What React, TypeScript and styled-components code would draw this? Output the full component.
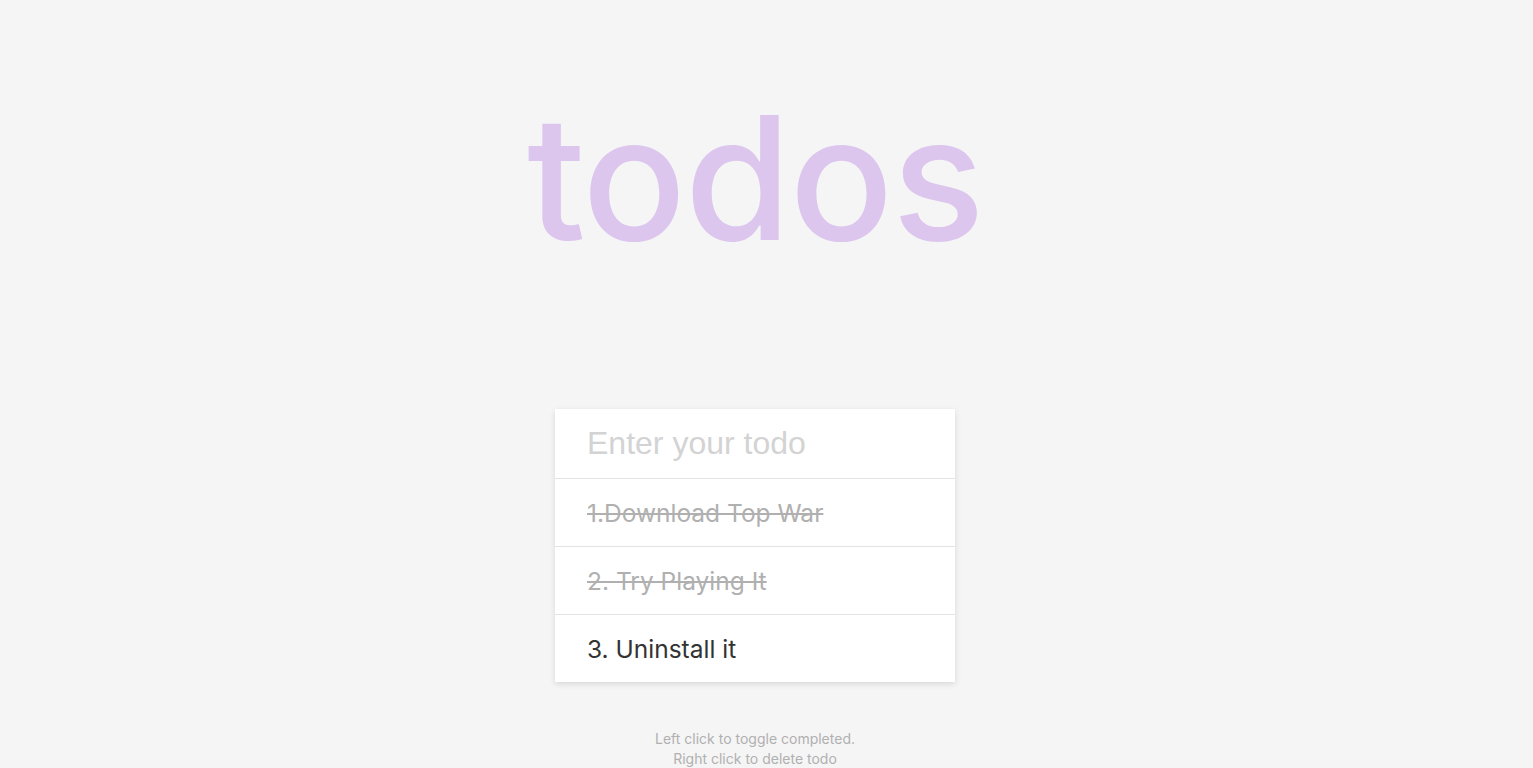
import styled, { createGlobalStyle } from 'styled-components';

const GlobalStyle = createGlobalStyle`
  * { box-sizing: border-box; }
  body {
    margin: 0;
    background-color: #f5f5f5;
    font-family: Inter, "Open Sans", sans-serif;
    overflow: hidden;
  }
`

const Page = styled.div`
  width: calc(100% - 23px);
  display: flex;
  flex-direction: column;
  align-items: center;
`

const Title = styled.h1`
  margin: 0;
  height: 409px;
  padding-top: 91px;
  font-size: 172px;
  line-height: 1;
  font-weight: 500;
  letter-spacing: -1.5px;
  color: #dcc6ee;
`

const Card = styled.div`
  width: 400px;
  background-color: #fff;
  box-shadow: 0 2px 6px rgba(0, 0, 0, 0.12);
`

const TodoInput = styled.input`
  display: block;
  width: 100%;
  height: 70px;
  border: none;
  outline: none;
  padding: 0 32px;
  font-family: "Liberation Sans", Arial, sans-serif;
  font-size: 32px;
  color: #333;
  border-bottom: 1px solid #e3e3e3;
  &::placeholder {
    color: #d3d3d3;
  }
`

const TodoList = styled.ul`
  list-style: none;
  margin: 0;
  padding: 0;
`

const TodoItem = styled.li<{ completed: boolean }>`
  height: 68px;
  padding: 0 32px;
  display: flex;
  align-items: center;
  font-size: 24.5px;
  font-weight: 400;
  color: ${(props) => (props.completed ? '#b0b0b0' : '#333')};
  text-decoration: ${(props) => (props.completed ? 'line-through' : 'none')};
  border-bottom: 1px solid #e3e3e3;
  cursor: pointer;
  &:last-child {
    height: 67px;
    border-bottom: none;
  }
`

const Hint = styled.p`
  margin: 47px 0 0;
  font-size: 14px;
  line-height: 20px;
  color: #b0b0b0;
  text-align: center;
`

const todos = [
  { id: 1, text: '1.Download Top War', completed: true },
  { id: 2, text: '2. Try Playing It', completed: true },
  { id: 3, text: '3. Uninstall it', completed: false },
]

export default function App() {
  return (
    <>
      <GlobalStyle />
      <Page>
        <Title>todos</Title>
        <Card>
          <TodoInput placeholder="Enter your todo" />
          <TodoList>
            {todos.map((todo) => (
              <TodoItem key={todo.id} completed={todo.completed}>
                {todo.text}
              </TodoItem>
            ))}
          </TodoList>
        </Card>
        <Hint>
          Left click to toggle completed.
          <br />
          Right click to delete todo
        </Hint>
      </Page>
    </>
  )
}
